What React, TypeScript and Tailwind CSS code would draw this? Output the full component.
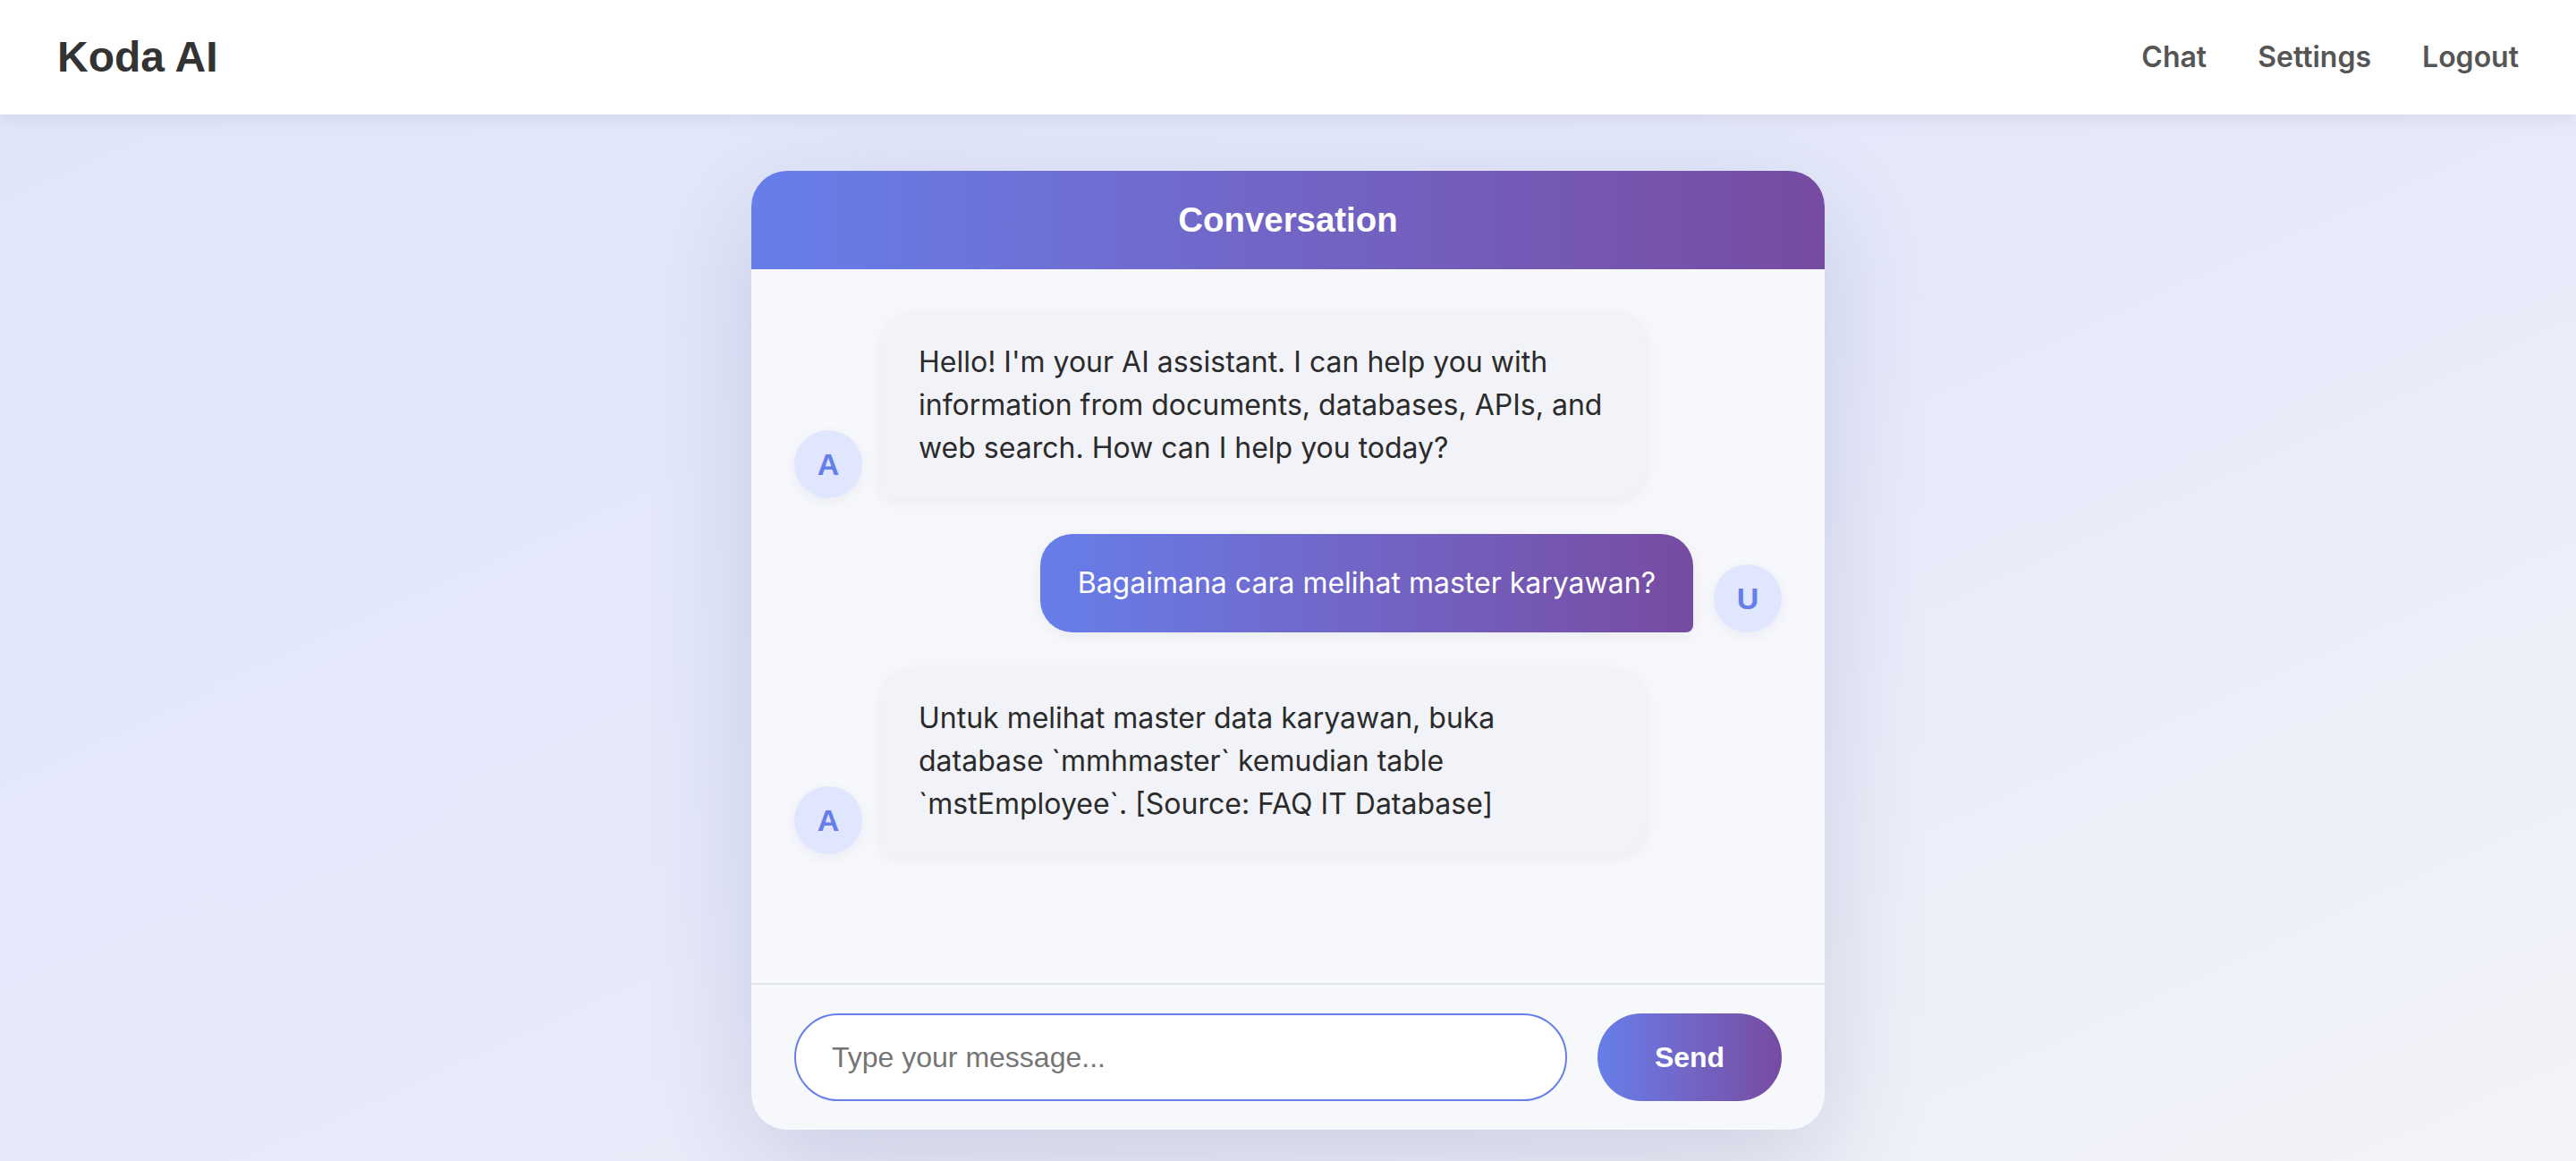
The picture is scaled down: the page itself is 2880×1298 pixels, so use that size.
import { useState } from "react";

const Avatar = ({ letter }: { letter: string }) => (
  <div className="w-[76px] h-[76px] shrink-0 rounded-full bg-[#e0e6fd] shadow-[0_4px_14px_rgba(80,90,160,0.08)] flex items-center justify-center text-[34px] font-bold text-[#667eea] font-['Liberation_Sans',Arial,sans-serif]">
    {letter}
  </div>
);

const messages = [
  {
    role: "assistant",
    text: "Hello! I'm your AI assistant. I can help you with information from documents, databases, APIs, and web search. How can I help you today?",
  },
  { role: "user", text: "Bagaimana cara melihat master karyawan?" },
  {
    role: "assistant",
    text: "Untuk melihat master data karyawan, buka database `mmhmaster` kemudian table `mstEmployee`. [Source: FAQ IT Database]",
  },
];

export default function App() {
  const [input, setInput] = useState("");

  return (
    <div className="min-h-screen bg-gradient-to-br from-[#e0e6fb] via-[#e6e9fa] to-[#f3f4f8] font-['Inter',sans-serif]">
      {/* Top bar */}
      <header className="h-[128px] bg-white flex items-center justify-between px-[64px] shadow-[0_4px_20px_rgba(0,0,0,0.08)] relative z-10">
        <h1 className="text-[48px] font-bold text-[#333] font-['Liberation_Sans',Arial,sans-serif]">Koda AI</h1>
        <nav className="flex items-center gap-[57px] text-[32px] font-semibold text-[#555]">
          <a href="#">Chat</a>
          <a href="#">Settings</a>
          <a href="#">Logout</a>
        </nav>
      </header>

      <main className="flex justify-center pt-[63px]">
        <div className="w-[1200px] h-[1072px] rounded-[40px] overflow-hidden bg-[#f7f8fc] shadow-[0_40px_120px_rgba(40,50,110,0.16)] flex flex-col">
          <div className="h-[110px] shrink-0 bg-gradient-to-r from-[#667eea] to-[#764ba2] flex items-center justify-center">
            <h2 className="text-[38.4px] font-bold text-white font-['Liberation_Sans',Arial,sans-serif]">Conversation</h2>
          </div>

          {/* Messages */}
          <div className="flex-1 px-[48px] pt-[48px] flex flex-col gap-[40px] text-[32px] leading-[48px]">
            {messages.map((m, i) =>
              m.role === "assistant" ? (
                <div key={i} className="flex items-end gap-[21px]">
                  <Avatar letter="A" />
                  <div className="w-[856px] bg-[#f1f3f8] rounded-[36px] rounded-bl-[8px] px-[42px] py-[32px] text-[#2b2b2b] shadow-[0_4px_20px_rgba(0,0,0,0.05)]">
                    {m.text}
                  </div>
                </div>
              ) : (
                <div key={i} className="flex items-end justify-end gap-[23px]">
                  <div className="bg-gradient-to-r from-[#667eea] to-[#764ba2] rounded-[36px] rounded-br-[8px] px-[42px] py-[31px] text-white shadow-[0_4px_20px_rgba(0,0,0,0.06)]">
                    {m.text}
                  </div>
                  <Avatar letter="U" />
                </div>
              )
            )}
          </div>

          {/* Composer */}
          <div className="shrink-0 border-t-2 border-[#e3e5ec] px-[48px] py-[32px] flex items-center gap-[34px]">
            <input
              value={input}
              onChange={(e) => setInput(e.target.value)}
              placeholder="Type your message..."
              className="flex-1 h-[98px] rounded-full border-2 border-[#667eea] bg-white px-[40px] text-[32px] text-[#333] placeholder:text-[#757575] outline-none font-['Liberation_Sans',Arial,sans-serif]"
            />
            <button className="w-[206px] h-[98px] rounded-full bg-gradient-to-r from-[#667eea] to-[#764ba2] text-white text-[32px] font-bold font-['Liberation_Sans',Arial,sans-serif]">
              Send
            </button>
          </div>
        </div>
      </main>
    </div>
  );
}
